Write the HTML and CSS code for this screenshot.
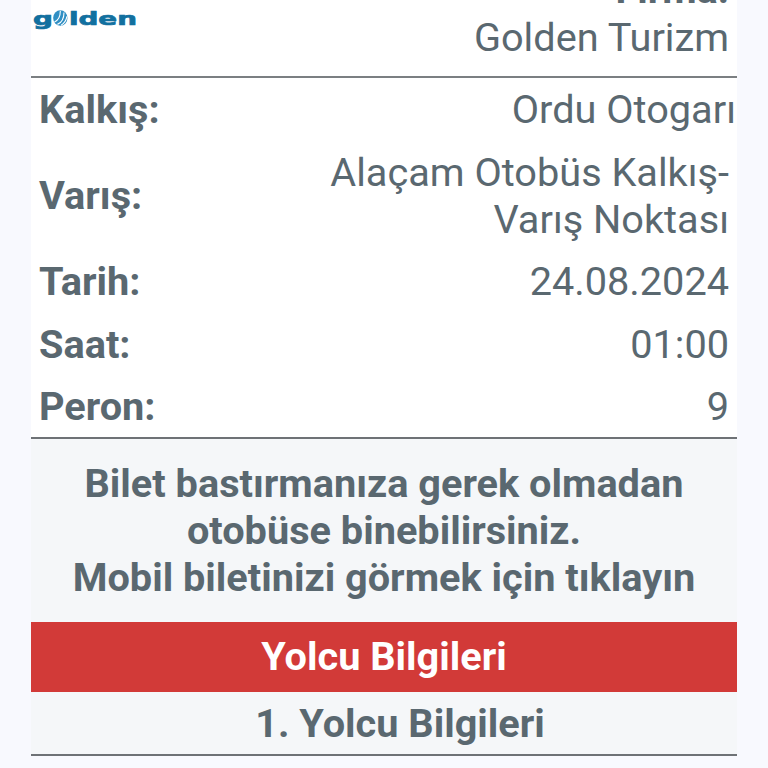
FILE: index.html
```html
<!DOCTYPE html>
<html lang="tr">
<head>
<meta charset="utf-8">
<title>Bilet</title>
<link rel="stylesheet" href="styles.css">
</head>
<body>
<main class="ticket">
  <section class="firm">
    <div class="logo">
      <div class="logo-top">TURİZM SEYAHAT</div>
      <div class="logo-word">g<svg class="globe" viewBox="0 0 20 20" preserveAspectRatio="none" aria-hidden="true"><circle cx="10" cy="10" r="9.8" fill="#2f8fc4"/><path d="M2 15 C7 13 10 8 10 1 M6 18 C11 16 15 11 15 3 M11 19 C15 17 18 13 19 8" stroke="#fff" stroke-width="1.5" fill="none"/></svg>lden</div>
    </div>
    <div class="firm-text">
      <div class="label">Firma:</div>
      <div class="value">Golden Turizm</div>
    </div>
  </section>
  <section class="details">
    <div class="row row-kalkis"><span class="label">Kalkış:</span><span class="value value-flush">Ordu Otogarı</span></div>
    <div class="row row-varis"><span class="label">Varış:</span><span class="value value-wrap">Alaçam Otobüs Kalkış-Varış Noktası</span></div>
    <div class="row"><span class="label">Tarih:</span><span class="value">24.08.2024</span></div>
    <div class="row"><span class="label">Saat:</span><span class="value">01:00</span></div>
    <div class="row"><span class="label">Peron:</span><span class="value">9</span></div>
  </section>
  <section class="notice">
    <p>Bilet bastırmanıza gerek olmadan<br>otobüse binebilirsiniz.<br>Mobil biletinizi görmek için tıklayın</p>
  </section>
  <h2 class="band">Yolcu Bilgileri</h2>
  <h3 class="sub">1. Yolcu Bilgileri</h3>
</main>
</body>
</html>
```
FILE: styles.css
```css
* { box-sizing: border-box; }
html, body { margin: 0; height: 100%; }
body {
  height: 768px;
  overflow: hidden;
  background: #f8f9fe;
  font-family: Roboto, "Liberation Sans", sans-serif;
  color: #5a6870;
}
.ticket {
  width: 706px;
  margin: -24px 0 0 31px;
  background: #fff;
}
.firm {
  height: 102px;
  display: flex;
  justify-content: space-between;
  border-bottom: 2px solid #7b7f82;
  padding-right: 8px;
}
.logo { width: 110px; margin: 19px 0 0 2px; }
.logo-top {
  height: 5px;
  font-size: 5px;
  line-height: 5px;
  width: 104px;
  text-align: center;
  color: #5cb3dc;
  overflow: hidden;
}
.logo-word {
  display: flex;
  align-items: center;
  height: 22px;
  margin-top: 8px;
  font-family: "DejaVu Sans", sans-serif;
  font-weight: 700;
  font-size: 18px;
  line-height: 22px;
  color: #12709f;
  -webkit-text-stroke: 0.7px #12709f;
  transform: scaleX(1.54);
  transform-origin: left center;
}
.globe { width: 9.5px; height: 16px; margin: -3px 0.5px 0; }
.firm-text { text-align: right; margin-top: -3px; }
.label { font-weight: 700; font-size: 39.7px; line-height: 43px; }
.firm-text .label { line-height: 34px; }
.value { font-weight: 400; font-size: 39.7px; line-height: 47px; }
.firm-text .value { display: block; line-height: 42px; margin-top: 10px; }
.details {
  padding: 0 8px;
  border-bottom: 2px solid #6e7276;
}
.row {
  display: flex;
  justify-content: space-between;
  align-items: center;
  min-height: 62.5px;
}
.row:last-child { margin-bottom: -1px; }
.value-flush { margin-right: -7px; }
.row-varis { min-height: 93px; margin-top: 8px; margin-bottom: 8px; }
.value-wrap { width: 420px; text-align: right; }
.notice {
  height: 183px;
  background: #f5f7f9;
  display: flex;
  align-items: center;
  justify-content: center;
}
.notice p {
  margin: 0;
  text-align: center;
  font-weight: 700;
  font-size: 39.7px;
  line-height: 47px;
}
.band {
  margin: 0;
  height: 70px;
  background: #d23a38;
  color: #fff;
  font-size: 39.7px;
  font-weight: 700;
  text-align: center;
  line-height: 70px;
}
.sub {
  margin: 0;
  height: 64px;
  padding-left: 32px;
  background: #f5f7f9;
  border-bottom: 2px solid #6e7276;
  text-align: center;
  font-size: 39.7px;
  font-weight: 700;
  line-height: 64px;
}
```
